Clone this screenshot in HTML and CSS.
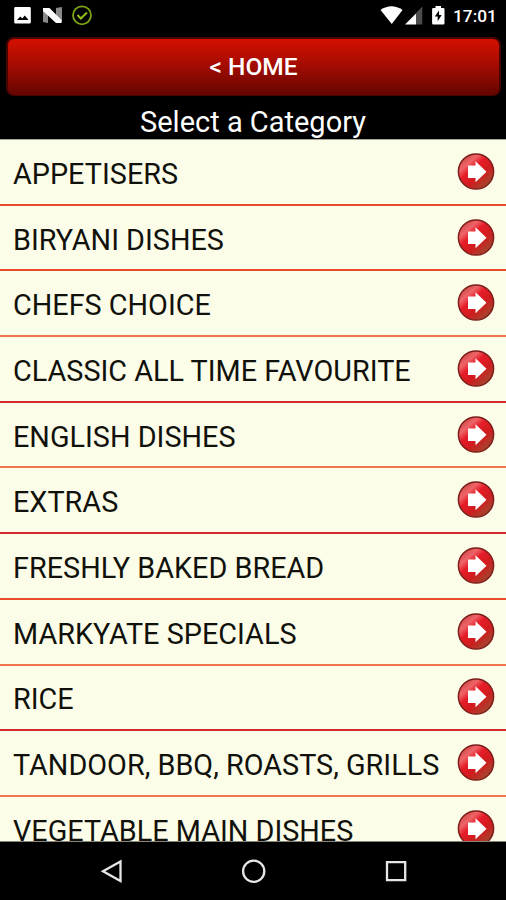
FILE: index.html
```html
<!DOCTYPE html>
<html lang="en">

<head>
  <meta charset="UTF-8">
  <meta name="viewport" content="width=device-width, initial-scale=1.0">
  <title>Select a Category</title>
  <link rel="stylesheet" href="styles.css">
</head>

<body>
  <!-- Shared icon for the category rows -->
  <svg class="defs" width="0" height="0">
    <defs>
      <linearGradient id="ball" x1="0.15" y1="0.1" x2="0.85" y2="0.9">
        <stop offset="0" stop-color="#d04a4a" />
        <stop offset="0.2" stop-color="#ee6468" />
        <stop offset="0.38" stop-color="#e61c28" />
        <stop offset="0.65" stop-color="#d01c1e" />
        <stop offset="1" stop-color="#a04a30" />
      </linearGradient>
      <symbol id="arrow" viewBox="0 0 38 38">
        <circle cx="19" cy="18.500" r="17.600" fill="url(#ball)" stroke="#7c1e1a" stroke-width="1.500" />
        <path d="M11 12.500h7.500V8.300L29.500 18.700 18.500 29.200V25H11z" fill="#fff" />
      </symbol>
    </defs>
  </svg>

  <!-- Status bar -->
  <div class="status">
    <svg class="status-left" width="100" height="32" viewBox="0 0 100 32">
      <path fill="#fff" fill-rule="evenodd" d="M15.500 7h14q1.300 0 1.300 1.300v13.900q0 1.300-1.300 1.300h-14q-1.300 0-1.300-1.300V8.300Q14.200 7 15.500 7zM17 20h11.500l-3.700-4.600-2.500 3-2-1.900z" />
      <path fill="#8a8a8a" d="M43 8h5v15l-5-1zM56 8l6-1v15l-6 1z" />
      <path fill="#fff" d="M43 8h6.500L61.500 20v3H56L43 11z" />
      <circle cx="82" cy="15.300" r="9" fill="none" stroke="#7da312" stroke-width="1.800" />
      <path d="M77.500 15l3.300 3.500 6.200-6" fill="none" stroke="#94bd1c" stroke-width="2" />
    </svg>
    <svg class="status-right" width="72" height="32" viewBox="380 0 72 32">
      <path fill="#fff" d="M380.500 10Q391.500 2.500 402.500 10L391.800 24z" />
      <path fill="#4c4c4c" d="M416 13l6.300-6.500V24.500H416z" />
      <path fill="#fff" d="M405 24.500L416 13.500v11z" />
      <path fill="#fff" fill-rule="evenodd" d="M435.500 6h5.500v2h2.300q1.200 0 1.200 1.200v14.100q0 1.200-1.200 1.200h-10q-1.200 0-1.200-1.200V9.200q0-1.200 1.200-1.200h2.200zM439 10.500l-4.200 6h2.900v4.700l4-6.200H439z" />
    </svg>
    <span class="clock">17:01</span>
  </div>

  <button class="home">&lt; HOME</button>
  <h1>Select a Category</h1>

  <!-- Category list -->
  <div class="list">
    <div class="row"><span>APPETISERS</span><svg><use href="#arrow" /></svg></div>
    <div class="row"><span>BIRYANI DISHES</span><svg><use href="#arrow" /></svg></div>
    <div class="row soft"><span>CHEFS CHOICE</span><svg><use href="#arrow" /></svg></div>
    <div class="row deep"><span>CLASSIC ALL TIME FAVOURITE</span><svg><use href="#arrow" /></svg></div>
    <div class="row soft"><span>ENGLISH DISHES</span><svg><use href="#arrow" /></svg></div>
    <div class="row deep"><span>EXTRAS</span><svg><use href="#arrow" /></svg></div>
    <div class="row"><span>FRESHLY BAKED BREAD</span><svg><use href="#arrow" /></svg></div>
    <div class="row soft"><span>MARKYATE SPECIALS</span><svg><use href="#arrow" /></svg></div>
    <div class="row deep"><span>RICE</span><svg><use href="#arrow" /></svg></div>
    <div class="row soft"><span>TANDOOR, BBQ, ROASTS, GRILLS</span><svg><use href="#arrow" /></svg></div>
    <div class="row"><span>VEGETABLE MAIN DISHES</span><svg><use href="#arrow" /></svg></div>
  </div>

  <!-- Navigation bar -->
  <div class="nav">
    <svg width="506" height="58" viewBox="0 842 506 58" fill="none" stroke="#e6e6e6" stroke-width="2.300">
      <path d="M120.500 861.500v19.500L103 871.200z" />
      <circle cx="253.700" cy="871.200" r="10.600" />
      <path d="M387 862.200h18.200v18H387z" />
    </svg>
  </div>
</body>

</html>
```
FILE: styles.css
```css
body {
  display: flex;
  flex-direction: column;
  height: 900px;
  margin: 0;
  background-color: #000;
  color: #fff;
  font-family: Roboto, "Liberation Sans", sans-serif;
  overflow: hidden;
}

.defs {
  position: absolute;
}

.status {
  display: flex;
  height: 32px;
  flex: none;
}

.status-right {
  margin-left: auto;
}

.clock {
  width: 54px;
  padding-left: 1px;
  box-sizing: border-box;
  font-size: 17.3px;
  font-weight: 500;
  line-height: 32px;
}

/* Red glossy button */
.home {
  flex: none;
  height: 59px;
  margin: 5px 5px 1px 6px;
  padding: 0 0 2px;
  border: 2px solid #480500;
  border-bottom-width: 1px;
  border-radius: 8px;
  background: linear-gradient(#d41000, #a60c02 45%, #640500);
  color: #fff;
  font-family: inherit;
  font-size: 24.5px;
  font-weight: 500;
}

h1 {
  flex: none;
  height: 42px;
  margin: 0;
  font-size: 29px;
  font-weight: 400;
  line-height: 51px;
  text-align: center;
}

/* The last row is cut off by the navigation bar */
.list {
  height: 701px;
  flex: none;
  border-top: 1px solid #a5a59a;
  border-bottom: 1px solid #85857c;
  background-color: #fcfde8;
  overflow: hidden;
}

.row {
  display: flex;
  justify-content: space-between;
  align-items: center;
  height: 65.7px;
  padding: 0 11px 0 13px;
  box-sizing: border-box;
  border-bottom: 2px solid #e84a2a;
  color: #11110c;
  font-size: 28.8px;
}

.row span {
  padding-top: 4px;
  white-space: nowrap;
}

.row svg {
  width: 38px;
  height: 38px;
}

.row.soft {
  border-color: #f0764f;
}

.row.deep {
  border-color: #d82830;
}

.nav {
  flex: 1;
}
```
